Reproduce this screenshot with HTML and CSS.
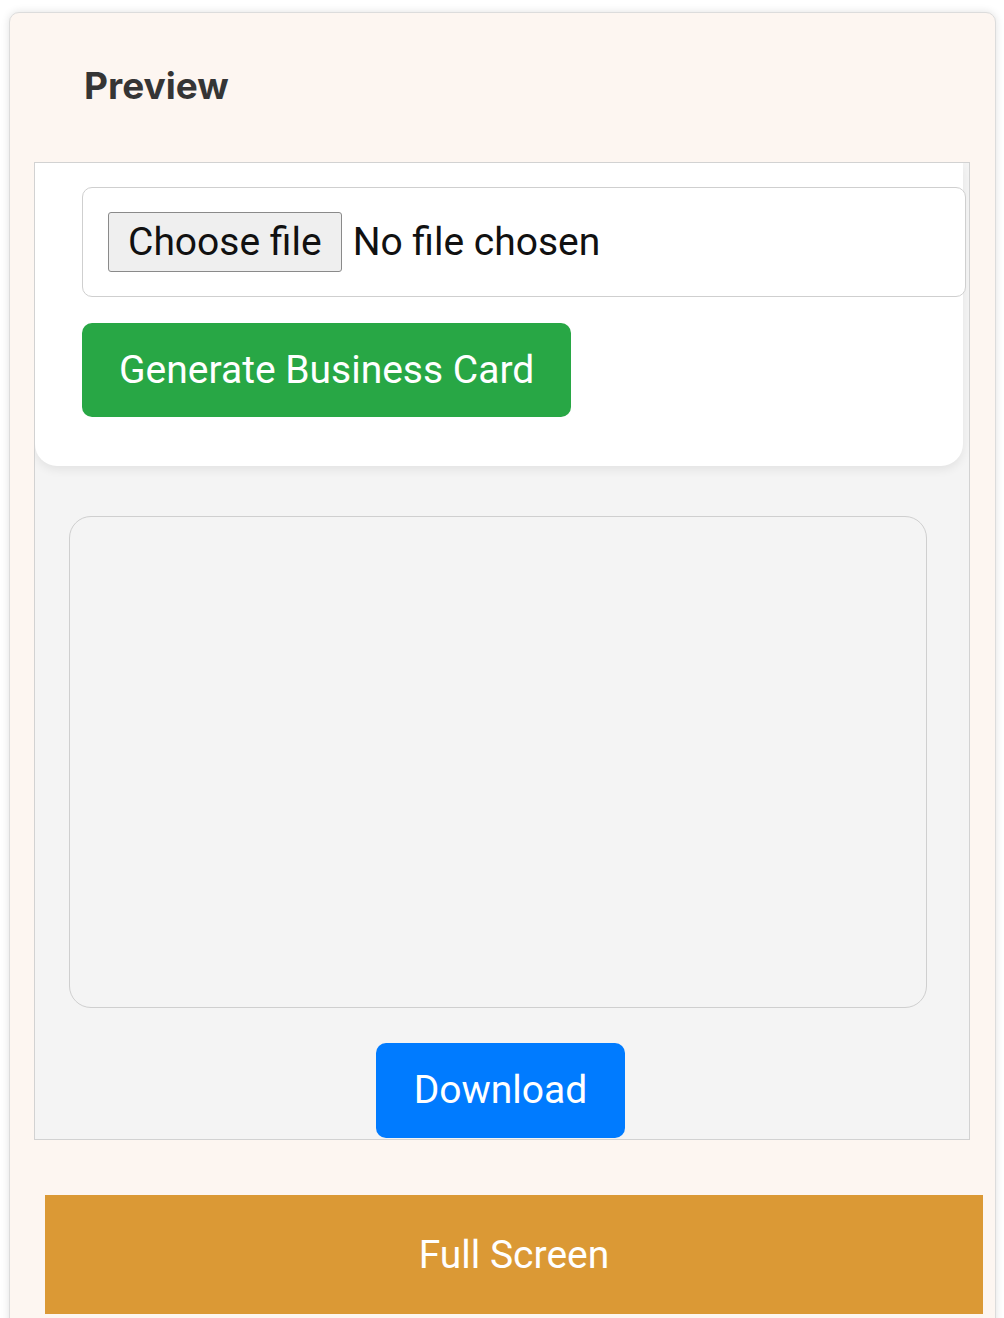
FILE: index.html
```html
<!DOCTYPE html>
<html lang="en">
<head>
<meta charset="utf-8">
<title>Preview</title>
<link rel="stylesheet" href="styles.css">
</head>
<body>
<div class="card">
  <h2 class="title">Preview</h2>
  <div class="frame">
    <div class="panel">
      <label class="file-box">
        <span class="file-btn">Choose file</span>
        <span class="file-name">No file chosen</span>
      </label>
      <button class="btn btn-green" type="button">Generate Business Card</button>
    </div>
    <div class="preview-box"></div>
    <div class="download-row">
      <button class="btn btn-blue" type="button">Download</button>
    </div>
  </div>
  <button class="full-btn" type="button">Full Screen</button>
</div>
</body>
</html>
```
FILE: styles.css
```css
html, body {
  margin: 0;
  padding: 0;
  background: #ffffff;
  overflow: hidden;
}
body {
  height: 1318px;
}
.card {
  margin: 12px 0 0 9px;
  width: 987px;
  height: 1360px;
  box-sizing: border-box;
  background: #fdf6f1;
  border: 1px solid #dcdcdc;
  border-radius: 10px;
  box-shadow: 0 0 8px rgba(0, 0, 0, 0.12);
  display: flex;
  flex-direction: column;
  align-items: flex-start;
}
.title {
  margin: 50px 0 0 74px;
  font-family: Inter, "Open Sans", sans-serif;
  font-weight: 700;
  font-size: 37px;
  line-height: 46px;
  color: #353535;
}
.frame {
  margin: 53px 0 0 24px;
  width: 936px;
  height: 978px;
  box-sizing: border-box;
  border: 1px solid #d2d2d2;
  background: #f4f4f4;
  overflow: hidden;
  font-family: Roboto, "Liberation Sans", sans-serif;
}
.panel {
  width: 928px;
  box-sizing: border-box;
  padding: 24px 0 49px 47px;
  background: #ffffff;
  border-radius: 0 0 22px 22px;
  box-shadow: 0 4px 10px rgba(0, 0, 0, 0.07);
  display: flex;
  flex-direction: column;
  align-items: flex-start;
  gap: 26px;
}
.file-box {
  width: 884px;
  height: 110px;
  box-sizing: border-box;
  border: 1px solid #cfcfcf;
  border-radius: 10px;
  padding: 0 25px;
  display: flex;
  align-items: center;
  gap: 11px;
  font-size: 39px;
  color: #111;
  background: #fff;
}
.file-btn {
  display: inline-block;
  padding: 7px 19px;
  line-height: 44px;
  background: #efefef;
  border: 1px solid #8a8a8a;
  border-radius: 3px;
}
.file-name {
  line-height: 44px;
}
.btn {
  font-family: Roboto, "Liberation Sans", sans-serif;
  font-size: 39px;
  line-height: 44px;
  color: #ffffff;
  border: none;
  border-radius: 10px;
  cursor: pointer;
}
.btn-green {
  background: #28a745;
  padding: 25px 37px;
}
.preview-box {
  margin: 50px 0 0 34px;
  width: 858px;
  height: 492px;
  box-sizing: border-box;
  border: 1px solid #cfcfcf;
  border-radius: 22px;
  background: #f4f4f4;
}
.download-row {
  margin-top: 35px;
  display: flex;
  justify-content: center;
  padding-right: 3px;
}
.btn-blue {
  background: #007bff;
  padding: 25px 38px 26px;
}
.full-btn {
  margin: 55px 0 0 35px;
  width: 938px;
  height: 119px;
  border: none;
  background: #db9935;
  color: #ffffff;
  font-family: Roboto, "Liberation Sans", sans-serif;
  font-size: 39px;
  padding: 0;
  cursor: pointer;
}
```
